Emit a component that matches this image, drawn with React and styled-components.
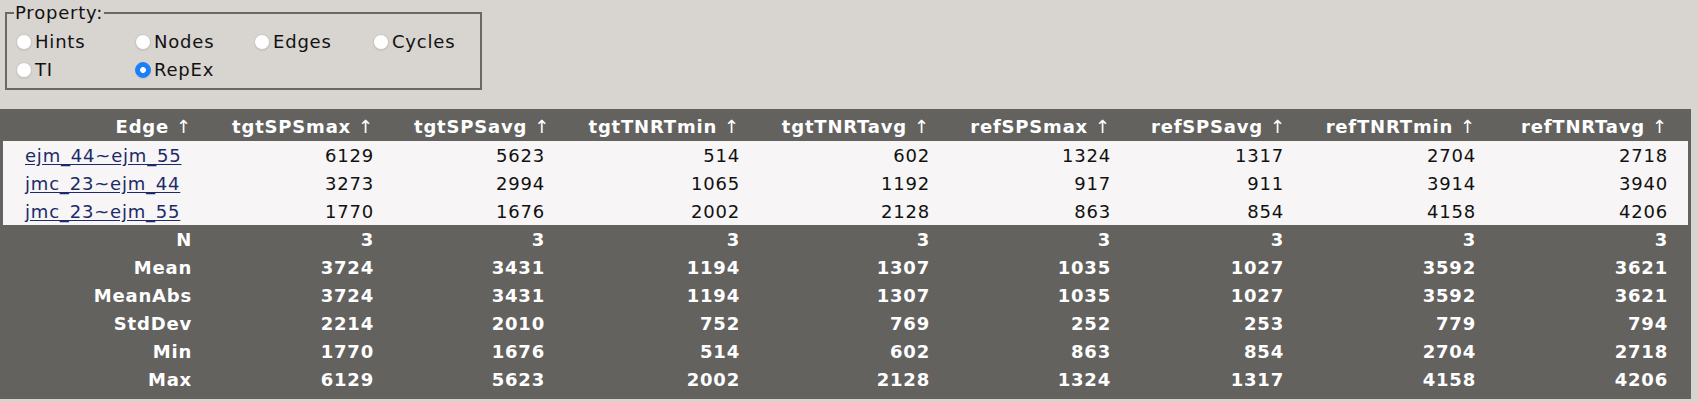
import styled, { createGlobalStyle } from "styled-components";

const GlobalStyle = createGlobalStyle`
    html, body {
        margin: 0;
        padding: 0;
        background: #d8d4d0;
    }

    body {
        font-family: "DejaVu Sans", Verdana, sans-serif;
        font-size: 18px;
        letter-spacing: 0.8px;
        color: #111;
    }
`;

const Page = styled.div`
    display: flex;
    flex-direction: column;
    align-items: flex-start;
    gap: 19px;
    padding-top: 2px;
`;

const PropertyBox = styled.fieldset`
    margin: 0 0 0 5px;
    width: 477px;
    min-width: 0;
    box-sizing: border-box;
    border: 2px solid #6a6866;
    padding: 4px 8px 4px 9px;
    display: grid;
    grid-template-columns: repeat(3, 119px) 1fr;
    grid-auto-rows: 28px;
    align-items: center;

    legend {
        padding: 0 1px;
        margin-left: -2px;
        line-height: 22px;
    }
`;

const Choice = styled.label`
    display: flex;
    align-items: center;
    gap: 3px;
    line-height: 22px;
`;

const Radio = styled.input.attrs({ type: "radio" })`
    appearance: none;
    margin: 0;
    width: 16px;
    height: 16px;
    border-radius: 50%;
    background: #fff;
    border: 1px solid #c9c6c3;
    box-shadow: 0 1px 1px rgba(0, 0, 0, 0.08);
    box-sizing: border-box;

    &:checked {
        background: radial-gradient(circle, #fff 0 2.6px, #1a7ff8 3.2px);
        border-color: #1a7ff8;
    }
`;

const Table = styled.table`
    width: 1691px;
    table-layout: fixed;
    border-collapse: separate;
    border-spacing: 0;
    border: 3px solid #63625f;
    border-bottom-width: 6px;
    background: #63625f;
`;

const HeadCell = styled.th`
    height: 29px;
    padding: 0 20px;
    text-align: right;
    color: #fff;
    font-weight: bold;
    white-space: nowrap;

    span {
        font-weight: normal;
    }
`;

const DataRow = styled.tr`
    background: #f7f5f5;
`;

const Cell = styled.td`
    height: 28px;
    padding: 0 20px 0 ${p => (p.$first ? "22px" : "20px")};
    text-align: ${p => (p.$first ? "left" : "right")};
    white-space: nowrap;
    color: ${p => (p.$stat ? "#fff" : "#111")};
    font-weight: ${p => (p.$stat ? "bold" : "normal")};
`;

const EdgeLink = styled.a`
    color: #1c2b68;
    text-decoration: underline;
    text-underline-offset: 2px;
`;

const widths = [209, 182, 171, 195, 190, 181, 173, 192, 192];

const columns = ["Edge", "tgtSPSmax", "tgtSPSavg", "tgtTNRTmin", "tgtTNRTavg", "refSPSmax", "refSPSavg", "refTNRTmin", "refTNRTavg"];

const rows = [
    ["ejm_44~ejm_55", 6129, 5623, 514, 602, 1324, 1317, 2704, 2718],
    ["jmc_23~ejm_44", 3273, 2994, 1065, 1192, 917, 911, 3914, 3940],
    ["jmc_23~ejm_55", 1770, 1676, 2002, 2128, 863, 854, 4158, 4206],
];

const stats = [
    ["N", 3, 3, 3, 3, 3, 3, 3, 3],
    ["Mean", 3724, 3431, 1194, 1307, 1035, 1027, 3592, 3621],
    ["MeanAbs", 3724, 3431, 1194, 1307, 1035, 1027, 3592, 3621],
    ["StdDev", 2214, 2010, 752, 769, 252, 253, 779, 794],
    ["Min", 1770, 1676, 514, 602, 863, 854, 2704, 2718],
    ["Max", 6129, 5623, 2002, 2128, 1324, 1317, 4158, 4206],
];

const options = ["Hints", "Nodes", "Edges", "Cycles", "TI", "RepEx"];

function App() {

    return (<Page>
        <GlobalStyle />

        <PropertyBox>
            <legend>Property:</legend>
            {options.map(o => (
                <Choice key={o}>
                    <Radio name="property" defaultChecked={o === "RepEx"} />
                    {o}
                </Choice>
            ))}
        </PropertyBox>

        <Table>
            <colgroup>
                {widths.map((w, i) => <col key={i} style={{ width: w }} />)}
            </colgroup>
            <thead>
                <tr>
                    {columns.map(c => <HeadCell key={c}>{c} <span>↑</span></HeadCell>)}
                </tr>
            </thead>
            <tbody>
                {rows.map(r => (
                    <DataRow key={r[0]}>
                        <Cell $first><EdgeLink href="#">{r[0]}</EdgeLink></Cell>
                        {r.slice(1).map((v, i) => <Cell key={i}>{v}</Cell>)}
                    </DataRow>
                ))}
                {stats.map(r => (
                    <tr key={r[0]}>
                        {r.map((v, i) => <Cell key={i} $stat>{v}</Cell>)}
                    </tr>
                ))}
            </tbody>
        </Table>
    </Page>);
}

export default App;
